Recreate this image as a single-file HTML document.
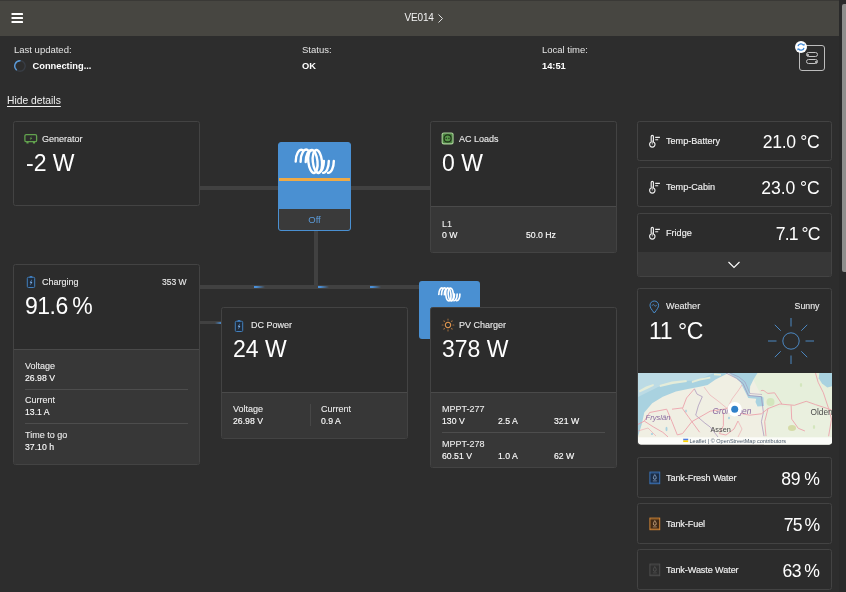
<!DOCTYPE html>
<html><head><meta charset="utf-8"><title>VE014</title>
<style>
*{box-sizing:border-box;margin:0;padding:0}
html,body{width:846px;height:592px;overflow:hidden;background:#2d2d2d;color:#f4f4f4;font-family:"Liberation Sans",Arial,sans-serif;font-size:9px}
body{position:relative;-webkit-font-smoothing:antialiased}
#root{position:absolute;left:0;top:0;width:846px;height:592px;will-change:transform}
.abs{position:absolute}
.hdr{position:absolute;left:0;top:0;width:839.500px;height:35.500px;background:#474641;border-top:1px solid #3a3936}
.sbtrack{position:absolute;left:839px;top:0;width:7px;height:592px;background:#2a2a2a}
.sbthumb{position:absolute;left:842px;top:3.500px;width:4px;height:268.500px;background:#8e8e8c;border-radius:2px 0 0 2px}
.t{position:absolute;white-space:nowrap;line-height:1}
.card{position:absolute;background:#2c2c2c;border:1px solid #434343;border-radius:2.500px;overflow:hidden}
.foot{position:absolute;left:0;right:0;bottom:0;background:#373737;border-top:1px solid #4a4a4a}
.line{position:absolute;background:#414141}
.big{font-size:23px;color:#fff;margin-top:-0.5px}
.lbl{font-size:9px;color:#ececec;margin-top:1px;-webkit-text-stroke:0.100px #ececec}
.val{font-size:8.7px;color:#fff;-webkit-text-stroke:0.12px #fff}
.fl{margin-top:0}
.rl{margin-top:-0.2px;font-size:9.1px}
.sep{position:absolute;height:1px;background:#4d4d4d}
</style></head><body>
<div id="root">

<div class="hdr"></div>
<div class="sbtrack"></div><div class="sbthumb"></div>

<!-- hamburger -->
<svg class="abs" style="left:11px;top:12px" width="13" height="12" viewBox="0 0 13 12"><g fill="#fff"><rect x="0.5" y="1" width="11.5" height="2" rx="0.6"/><rect x="0.5" y="5" width="11.5" height="2" rx="0.6"/><rect x="0.5" y="9" width="11.5" height="2" rx="0.6"/></g></svg>
<div class="t" style="left:404.500px;top:13px;font-size:10px;letter-spacing:-0.150px;color:#f2f2f2">VE014</div>
<svg class="abs" style="left:436px;top:13px" width="9" height="11" viewBox="0 0 9 11"><path d="M2.5 1.5 L6.5 5.5 L2.5 9.5" fill="none" stroke="#e0e0e0" stroke-width="1"/></svg>

<!-- info row -->
<div class="t" style="left:14px;top:45.300px;font-size:9.500px;color:#e4e4e4">Last updated:</div>
<svg class="abs" style="left:13px;top:59px" width="14" height="14" viewBox="0 0 14 14"><circle cx="7" cy="7" r="5.200" fill="none" stroke="#383d45" stroke-width="1.400"/><path d="M7 1.8 A5.2 5.2 0 0 0 3.3 10.7" fill="none" stroke="#5b9bd8" stroke-width="1.4" stroke-linecap="round"/></svg>
<div class="t" style="left:32.500px;top:61.700px;font-size:9.3px;font-weight:bold;color:#fff">Connecting...</div>
<div class="t" style="left:302px;top:45.300px;font-size:9.500px;color:#e4e4e4">Status:</div>
<div class="t" style="left:302px;top:61.5px;font-size:9.3px;font-weight:bold;color:#fff">OK</div>
<div class="t" style="left:542px;top:45.300px;font-size:9.500px;color:#e4e4e4">Local time:</div>
<div class="t" style="left:542px;top:61.5px;font-size:9.3px;font-weight:bold;color:#fff">14:51</div>

<!-- controls icon -->
<div class="abs" style="left:799px;top:45px;width:26px;height:26px;border:1.300px solid #bdbdbd;border-radius:3px"></div>
<div class="abs" style="left:806px;top:52.300px;width:12.300px;height:5.200px;border:1px solid #c4c4c4;border-radius:3px"></div><div class="abs" style="left:807.300px;top:53.900px;width:2.200px;height:2.200px;border-radius:2px;background:#d0d0d0"></div>
<div class="abs" style="left:806px;top:59px;width:12.300px;height:5.200px;border:1px solid #c4c4c4;border-radius:3px"></div><div class="abs" style="left:814.800px;top:60.600px;width:2.200px;height:2.200px;border-radius:2px;background:#d0d0d0"></div>
<div class="abs" style="left:794.600px;top:40.500px;width:12px;height:12px;border-radius:6px;background:#fff"></div>
<svg class="abs" style="left:794.600px;top:40.500px" width="12" height="12" viewBox="0 0 12 12"><path d="M3 5.2 A3.1 3.1 0 0 1 8.6 4.2 M9 6.8 A3.1 3.1 0 0 1 3.4 7.8" fill="none" stroke="#3b86d6" stroke-width="1.3"/><path d="M7.5 4.6 L9.6 4.6 L9.6 2.6 Z M4.5 7.4 L2.4 7.4 L2.4 9.4 Z" fill="#3b86d6"/></svg>

<div class="t" style="left:7px;top:95.500px;font-size:10.300px;color:#f0f0f0;text-decoration:underline;text-underline-offset:1.5px">Hide details</div>

<!-- connectors -->
<div class="line" style="left:199px;top:186px;width:80px;height:3.7px"></div>
<div class="line" style="left:350px;top:186px;width:80px;height:3.7px"></div>
<div class="line" style="left:314px;top:231px;width:3.6px;height:56px"></div>
<div class="line" style="left:199px;top:285px;width:221px;height:3.800px"></div>
<div class="line" style="left:199px;top:320.800px;width:22px;height:3.700px"></div><div class="abs" style="left:215px;top:321.700px;width:6px;height:2px;background:linear-gradient(90deg,rgba(74,144,217,0),#4a86c4)"></div>
<div class="abs" style="left:254.2px;top:285.900px;width:11px;height:2px;background:linear-gradient(90deg,#4a90d9 20%,rgba(74,144,217,0))"></div>
<div class="abs" style="left:318.2px;top:285.900px;width:11px;height:2px;background:linear-gradient(90deg,#4a90d9 20%,rgba(74,144,217,0))"></div>
<div class="abs" style="left:370.2px;top:285.900px;width:11px;height:2px;background:linear-gradient(90deg,#4a90d9 20%,rgba(74,144,217,0))"></div>

<!-- Generator -->
<div class="card" style="left:13px;top:121px;width:187px;height:85px"></div>
<svg class="abs" style="left:24px;top:133px" width="14" height="12" viewBox="0 0 14 12"><rect x="0.900" y="1.700" width="11.700" height="7" rx="1.300" fill="none" stroke="#62a24e" stroke-width="1.300"/><rect x="2.400" y="8.800" width="2.200" height="1.700" rx="0.500" fill="#62a24e"/><rect x="8.900" y="8.800" width="2.200" height="1.700" rx="0.500" fill="#62a24e"/><path d="M7.800 3.200L5.600 5.600H6.800L6 7.400L8.300 4.900H7.100Z" fill="#62a24e"/></svg>
<div class="t lbl" style="left:42px;top:134px">Generator</div>
<div class="t big" style="left:26px;top:152px">-2 W</div>

<!-- Charging -->
<div class="card" style="left:13px;top:264px;width:187px;height:201px"><div class="foot" style="height:115px"></div></div>
<svg class="abs" style="left:26px;top:275px" width="10" height="14" viewBox="0 0 10 14"><rect x="1.300" y="2.300" width="7.400" height="10.200" rx="1.100" fill="#1f2b3a" stroke="#4380bd" stroke-width="1"/><rect x="3.600" y="0.900" width="2.800" height="1.500" rx="0.400" fill="#3f7dc0"/><path d="M5.900 4.200L3.700 7.700H4.900L4.200 10.600L6.400 7H5.200Z" fill="#7db2ea"/></svg>
<div class="t lbl" style="left:42px;top:277px">Charging</div>
<div class="t lbl" style="left:162px;top:277px;font-size:8.5px">353 W</div>
<div class="t big" style="left:25px;top:295px;letter-spacing:-0.5px;word-spacing:-1.5px">91.6 %</div>
<div class="t lbl fl" style="left:25px;top:362px">Voltage</div>
<div class="t val" style="left:25px;top:374px">26.98 V</div>
<div class="sep" style="left:25px;top:389px;width:163px"></div>
<div class="t lbl fl" style="left:25px;top:396px">Current</div>
<div class="t val" style="left:25px;top:408px">13.1 A</div>
<div class="sep" style="left:25px;top:423px;width:163px"></div>
<div class="t lbl fl" style="left:25px;top:431px">Time to go</div>
<div class="t val" style="left:25px;top:443px">37.10 h</div>

<!-- Inverter -->
<div class="abs" style="left:278px;top:142px;width:73px;height:89px;background:#4a90d2;border-radius:3px;overflow:hidden;border:1px solid #4a90d2">
  <div class="abs" style="left:0;right:0;top:35px;height:3px;background:#efaa46"></div>
  <div class="abs" style="left:0;right:0;bottom:0;height:21.5px;background:#3a3a3a"></div>
  <div class="t" style="left:0;right:0;top:72px;text-align:center;font-size:9.5px;color:#5b9ad8">Off</div>
</div>
<svg class="abs" style="left:293px;top:148px" width="44" height="28" viewBox="0 0 44 28"><g fill="none" stroke="#fff" stroke-width="2.4" stroke-linecap="round"><path d="M2.7 13.6 A5.6 12 0 0 1 9.6 2.1"/><path d="M7.6 13.8 A5.6 12 0 0 1 14.7 2.1"/><path d="M12.7 14 A5.6 12 0 0 1 18.6 2.2"/><ellipse cx="19.9" cy="13.5" rx="4.6" ry="11.5" transform="rotate(-6 19.9 13.5)"/><ellipse cx="24.4" cy="13.500" rx="4.600" ry="11.500" transform="rotate(-6 24.4 13.5)"/><path d="M40.800 12.900 A5.600 12 0 0 1 35 24.900"/><path d="M35.800 12.900 A5.600 12 0 0 1 30.100 24.900"/><path d="M30.900 12.900 A5.600 12 0 0 1 26.500 24"/></g></svg>

<!-- AC Loads -->
<div class="card" style="left:430px;top:121px;width:187px;height:132px"><div class="foot" style="height:46px"></div></div>
<svg class="abs" style="left:441px;top:132px" width="13" height="13" viewBox="0 0 13 13"><rect x="0.600" y="0.400" width="12" height="12" rx="2.200" fill="#a9cf98"/><rect x="1.700" y="1.500" width="9.800" height="9.800" rx="1.300" fill="#4a8440"/><circle cx="6.600" cy="6.400" r="3.500" fill="#5a9a4c" stroke="#1f3319" stroke-width="1.200"/><circle cx="5.300" cy="6.400" r="0.800" fill="#2a4222"/><circle cx="7.900" cy="6.400" r="0.800" fill="#2a4222"/></svg>
<div class="t lbl" style="left:459px;top:134px">AC Loads</div>
<div class="t big" style="left:442px;top:152px">0 W</div>
<div class="t lbl" style="left:442px;top:218.500px">L1</div>
<div class="t val" style="left:442px;top:231px">0 W</div>
<div class="t val" style="left:526px;top:231px">50.0 Hz</div>

<!-- DC Power -->
<div class="card" style="left:221px;top:307px;width:187px;height:132px"><div class="foot" style="height:46px"></div></div>
<svg class="abs" style="left:234px;top:318.5px" width="10" height="14" viewBox="0 0 10 14"><rect x="1.300" y="2.300" width="7.400" height="10.200" rx="1.100" fill="#1f2b3a" stroke="#4380bd" stroke-width="1"/><rect x="3.600" y="0.900" width="2.800" height="1.500" rx="0.400" fill="#3f7dc0"/><path d="M5.900 4.200L3.700 7.700H4.900L4.200 10.600L6.400 7H5.200Z" fill="#7db2ea"/></svg>
<div class="t lbl" style="left:251px;top:320px">DC Power</div>
<div class="t big" style="left:233px;top:338px">24 W</div>
<div class="t lbl fl" style="left:233px;top:405px">Voltage</div>
<div class="t val" style="left:233px;top:417px">26.98 V</div>
<div class="abs" style="left:310px;top:404px;width:1px;height:22px;background:#474747"></div>
<div class="t lbl fl" style="left:321px;top:405px">Current</div>
<div class="t val" style="left:321px;top:417px">0.9 A</div>

<!-- MPPT blue box -->
<div class="abs" style="left:419px;top:281px;width:61px;height:57.500px;background:#4a90d2;border-radius:3px"></div>
<svg class="abs" style="left:437px;top:287px" width="25" height="15.500" viewBox="0 0 44 28"><g fill="none" stroke="#fff" stroke-width="3" stroke-linecap="round"><path d="M2.7 13.6 A5.6 12 0 0 1 9.6 2.1"/><path d="M7.6 13.8 A5.6 12 0 0 1 14.7 2.1"/><path d="M12.7 14 A5.6 12 0 0 1 18.6 2.2"/><ellipse cx="19.9" cy="13.5" rx="4.6" ry="11.5" transform="rotate(-6 19.9 13.5)"/><ellipse cx="24.4" cy="13.500" rx="4.600" ry="11.500" transform="rotate(-6 24.4 13.5)"/><path d="M40.800 12.900 A5.600 12 0 0 1 35 24.900"/><path d="M35.800 12.900 A5.600 12 0 0 1 30.100 24.900"/><path d="M30.900 12.900 A5.600 12 0 0 1 26.500 24"/></g></svg>

<!-- PV Charger -->
<div class="card" style="left:430px;top:307px;width:187px;height:160.500px"><div class="foot" style="height:75px"></div></div>
<svg class="abs" style="left:440.800px;top:317.800px" width="14" height="14" viewBox="-7 -7 14 14"><circle r="2.700" fill="none" stroke="#e89c52" stroke-width="1.050"/><g stroke="#e0924a" stroke-width="1.100" stroke-linecap="round" opacity="0.600"><path d="M0 -4.900V-5.900M0 4.900V5.900M-4.900 0H-5.900M4.900 0H5.900M-3.500 -3.500L-4.200 -4.200M3.500 3.500L4.200 4.200M-3.500 3.500L-4.200 4.200M3.500 -3.500L4.200 -4.200"/></g></svg>
<div class="t lbl" style="left:459px;top:320px">PV Charger</div>
<div class="t big" style="left:442px;top:338px">378 W</div>
<div class="t lbl fl" style="left:442px;top:405px">MPPT-277</div>
<div class="t val" style="left:442px;top:417px">130 V</div>
<div class="t val" style="left:498px;top:417px">2.5 A</div>
<div class="t val" style="left:554px;top:417px">321 W</div>
<div class="sep" style="left:442px;top:432px;width:163px"></div>
<div class="t lbl fl" style="left:442px;top:440px">MPPT-278</div>
<div class="t val" style="left:442px;top:452px">60.51 V</div>
<div class="t val" style="left:498px;top:452px">1.0 A</div>
<div class="t val" style="left:554px;top:452px">62 W</div>

<!-- Right column -->
<div class="card" style="left:637px;top:121px;width:195px;height:40px"></div>
<svg class="abs" style="left:648px;top:134px" width="13" height="14" viewBox="0 0 13 14"><path d="M3.2 7.9 V2.4 A1.1 1.1 0 0 1 5.4 2.4 V7.9 A2.7 2.7 0 1 1 3.2 7.9 Z M7.2 3.3 H11.9 M7.2 5.7 H10.2" fill="none" stroke="#f0f0f0" stroke-width="1.150"/><path d="M4.300 6.500 V10.500" stroke="#ececec" stroke-width="0.7"/></svg>
<div class="t lbl rl" style="left:666px;top:137px;-webkit-text-stroke:0.150px #eee;color:#f2f2f2">Temp-Battery</div>
<div class="t" style="right:26.500px;top:134.2px;font-size:17.600px;color:#fff;letter-spacing:-0.300px">21.0 °C</div>

<div class="card" style="left:637px;top:167px;width:195px;height:40px"></div>
<svg class="abs" style="left:648px;top:180px" width="13" height="14" viewBox="0 0 13 14"><path d="M3.2 7.9 V2.4 A1.1 1.1 0 0 1 5.4 2.4 V7.9 A2.7 2.7 0 1 1 3.2 7.9 Z M7.2 3.3 H11.9 M7.2 5.7 H10.2" fill="none" stroke="#f0f0f0" stroke-width="1.150"/><path d="M4.300 6.500 V10.500" stroke="#ececec" stroke-width="0.7"/></svg>
<div class="t lbl rl" style="left:666px;top:183px;-webkit-text-stroke:0.150px #eee;color:#f2f2f2">Temp-Cabin</div>
<div class="t" style="right:26.500px;top:180.2px;font-size:17.600px;color:#fff;letter-spacing:-0.100px">23.0 °C</div>

<div class="card" style="left:637px;top:213px;width:195px;height:64px"><div class="foot" style="height:24px;border-top:none"></div></div>
<svg class="abs" style="left:648px;top:226px" width="13" height="14" viewBox="0 0 13 14"><path d="M3.2 7.9 V2.4 A1.1 1.1 0 0 1 5.4 2.4 V7.9 A2.7 2.7 0 1 1 3.2 7.9 Z M7.2 3.3 H11.9 M7.2 5.7 H10.2" fill="none" stroke="#f0f0f0" stroke-width="1.150"/><path d="M4.300 6.500 V10.500" stroke="#ececec" stroke-width="0.7"/></svg>
<div class="t lbl rl" style="left:666px;top:229px;-webkit-text-stroke:0.150px #eee;color:#f2f2f2">Fridge</div>
<div class="t" style="right:26.500px;top:226.2px;font-size:17.600px;color:#fff;letter-spacing:-0.900px">7.1 °C</div>
<svg class="abs" style="left:727px;top:260px" width="14" height="9" viewBox="0 0 14 9"><path d="M1.500 2 L7 7.500 L12.500 2" fill="none" stroke="#fff" stroke-width="1.100"/></svg>

<!-- Weather -->
<div class="card" style="left:637px;top:288px;width:195px;height:157px"></div>
<div class="t lbl rl" style="left:666px;top:302px">Weather</div>
<div class="t lbl rl" style="right:26.500px;top:302px;font-size:8.800px">Sunny</div>
<div class="t big" style="left:649px;top:320px;letter-spacing:-0.400px">11 °C</div>

<svg class="abs" style="left:765.700px;top:316px" width="50" height="50" viewBox="-25 -25 50 50"><g fill="none" stroke="#4f92d2" stroke-width="0.900"><circle r="8.200"/><path d="M0 -14.500V-23M0 14.500V23M-14.500 0H-23M14.500 0H23M-10.300 -10.300L-16.200 -16.200M10.300 10.300L16.200 16.200M-10.300 10.300L-16.200 16.200M10.300 -10.300L16.200 -16.200"/></g></svg>
<svg class="abs" style="left:649px;top:299.500px" width="11" height="14" viewBox="0 0 11 14"><path d="M5.300 13 C2.500 9.500 1 7.500 1 5.300 A4.300 4.300 0 0 1 9.600 5.300 C9.600 7.500 8 9.500 5.300 13Z" fill="none" stroke="#4a8fd0" stroke-width="1"/><path d="M3 5.800 C3.800 4 4.800 4.200 5.300 5.300 S6.900 6.600 7.700 4.900" fill="none" stroke="#4a8fd0" stroke-width="0.800"/></svg>
<!-- map -->
<svg class="abs" style="left:637.500px;top:373.200px;border-radius:0 0 3px 3px" width="194" height="71.500" viewBox="0 0 194 71.500">
<defs><clipPath id="mc"><path d="M0 0H194V68.500a3 3 0 0 1-3 3H3a3 3 0 0 1-3-3Z"/></clipPath></defs>
<g clip-path="url(#mc)">
<rect width="194" height="72" fill="#f0efe3"/>
<rect x="126" width="68" height="72" fill="#eaf0df"/>
<path d="M112 0H194V40L170 30 150 34 130 36 124 24Z" fill="#e6efdb"/>
<path d="M0 0H90.600L88 1.300 77.500 6.600 69.600 11.900 61.700 13.800 51.100 15.800 37.900 18.400 24.800 23.700 14.200 30.300 6.300 39.500 3.700 51.400 0 63.200Z" fill="#a9d2e0"/>
<path d="M0 0H76L60 7 40 9 20 14 8 20 0 24Z" fill="#bcdbe5"/>
<g fill="#e4ecd9"><path d="M1 17.500 L8 13.500 15.500 11 15.800 12.800 8 16.500 1.500 19.500Z"/><path d="M21.500 12 L34 8.500 48.500 7 48.800 9 35 11 22 14Z"/><path d="M53.800 8 L62 5.500 72.200 3.800 72.400 5.600 62 7.500 54 10Z"/><path d="M76 0.500 L83 1 83 2.800 76 2.200Z"/></g>
<path d="M98.400 0H119.500L115.500 6.600 112.200 13.200 111.600 22.400 123.400 23 125.400 24.400 126 32.900 119.500 33.600 117.500 29 118.200 25.700 110.300 25 106.300 17.100 102.400 9.200 98.400 5.300 90 0Z" fill="#a9d2e0"/>
<path d="M181.400 0H194V13.200L189.300 14.500 184 10.500 180.700 5.300Z" fill="#a9d2e0"/>
<g fill="#d3e6bd"><ellipse cx="132.500" cy="29" rx="4" ry="4"/><ellipse cx="154" cy="55" rx="4" ry="3" fill="#d5dba8"/><ellipse cx="163" cy="12" rx="1.200" ry="2"/><ellipse cx="176" cy="54" rx="1.200" ry="2"/></g>
<g fill="#a9d2e0"><ellipse cx="28.500" cy="56" rx="1" ry="2.200"/><ellipse cx="48" cy="38" rx="0.800" ry="1.500"/><ellipse cx="91" cy="45" rx="1" ry="1.200"/><ellipse cx="14" cy="61" rx="1.200" ry="1"/></g>
<g fill="none" stroke="#9d86b5" stroke-width="0.800" opacity="0.800"><path d="M56.400 15.800 L59 21.100 64.300 23.700 60.300 32.900 57.700 42.200 66.900 50.100 72.200 54 80 64"/><path d="M88 0 L98.400 5.300 105 10.500 110.300 22.400 123.400 23.700 125.400 39.500 123.400 48.700 126 63.200"/><path d="M92 0 L101 4 107 9 112 20.500 124 21.500" stroke-width="0.600"/></g>
<g fill="none" stroke="#ec9aa6" stroke-width="0.900" stroke-linejoin="round" opacity="0.900">
<path d="M0 51.400 L6.300 48.100 15.500 54 24.800 59.300 30 63.900"/>
<path d="M6.300 48.100 L11.600 39.500 28.700 36.200 34 48.700 39.300 61.900 44.500 60.600 53.800 48.700 72.200 38.200 89.300 35.600 98.400 39.500 111.600 42.200 123.400 40.800 130 35.600 141.900 31 156.400 32.300 168.200 28.300 177.500 31.600 193.500 36.900"/>
<path d="M56.400 15.800 L48.500 25 44.500 35.600 51.100 44.800 61.700 59.300"/>
<path d="M34 36.200 L44.500 34.900"/>
<path d="M85.400 39.500 L85.400 52.700 81.400 60.600 88 62 96 56 100 48"/>
<path d="M122.800 17.800 C126 16 128 20 130 20.400 L136.600 19.800 143.900 31"/>
<path d="M130 35.600 L126.700 48.700 128 63.200"/>
<path d="M177.500 0 L180.100 9.200 185.400 19.800 190.600 35.600 193.500 46.100 190.600 63.200"/>
<path d="M153.100 32.300 L153.700 46.100 160.300 55.300 166.900 58"/>
<path d="M89.300 35.600 L94 26 100 18 104 12" stroke-width="0.600"/>
<path d="M89.300 35.600 L80 28 72 22 66 14" stroke-width="0.600"/>
<path d="M0 58 L10 55 18 63" stroke-width="0.600"/>
<path d="M100 48 L104 56 100 64" stroke-width="0.600"/>
</g>
<g font-family="'Liberation Sans',sans-serif">
<text x="7.500" y="47" font-size="7.600" font-style="italic" fill="#8a6aa0">Fryslân</text>
<text x="74.500" y="41.300" font-size="8.300" font-style="italic" fill="#8a6aa0">Groningen</text>
<text x="72.500" y="58.800" font-size="7.300" fill="#4a4a4a">Assen</text>
<text x="172.500" y="41.500" font-size="8.300" fill="#4a4a4a">Oldenburg</text>
</g>
<circle cx="96.700" cy="36.200" r="7.200" fill="#fff"/>
<circle cx="96.700" cy="36.200" r="3.500" fill="#2f80c9"/>
<rect x="0" y="64.300" width="194" height="8" fill="#fff" opacity="0.780"/>
<rect x="45.200" y="65.700" width="5" height="1.700" fill="#4c7be1"/><rect x="45.200" y="67.400" width="5" height="1.700" fill="#ffd500"/>
<text x="51.500" y="69.600" font-family="'Liberation Sans',sans-serif" font-size="5.500" fill="#4a5a6a" textLength="96.500" lengthAdjust="spacingAndGlyphs">Leaflet | © OpenStreetMap contributors</text>
</g>
</svg>

<!-- Tanks -->
<div class="card" style="left:637px;top:457px;width:195px;height:41px"></div>
<svg class="abs" style="left:649px;top:471px" width="12" height="14" viewBox="0 0 12 14"><rect x="0.900" y="1.100" width="9.800" height="11.600" fill="#1b2c44" stroke="#3b72b6" stroke-width="1"/><path d="M0.900 2.300H10.700M0.900 11.500H10.700" stroke="#3f78be" stroke-width="0.500" opacity="0.700"/><path d="M5.800 3.600C4.800 5.200 4.400 6 4.400 6.900A1.400 1.400 0 0 0 7.200 6.900C7.200 6 6.800 5.200 5.800 3.600Z" fill="none" stroke="#9dbbe0" stroke-width="0.750"/><path d="M3.800 9.900H7.800" stroke="#9dbbe0" stroke-width="0.600"/></svg>
<div class="t lbl rl" style="left:666px;top:474.1px;letter-spacing:-0.100px;-webkit-text-stroke:0.150px #eee;color:#f2f2f2">Tank-Fresh Water</div>
<div class="t" style="right:26.500px;top:471px;font-size:17.600px;color:#fff;letter-spacing:-0.300px;word-spacing:-0.700px">89 %</div>
<div class="card" style="left:637px;top:503px;width:195px;height:41px"></div>
<svg class="abs" style="left:649px;top:517px" width="12" height="14" viewBox="0 0 12 14"><rect x="0.900" y="1.100" width="9.800" height="11.600" fill="#402a16" stroke="#cf8436" stroke-width="1"/><path d="M0.900 2.300H10.700M0.900 11.500H10.700" stroke="#d88a38" stroke-width="0.500" opacity="0.700"/><path d="M5.800 3.600C4.800 5.200 4.400 6 4.400 6.900A1.400 1.400 0 0 0 7.200 6.900C7.200 6 6.800 5.200 5.800 3.600Z" fill="none" stroke="#e6c09a" stroke-width="0.750"/><path d="M3.800 9.900H7.800" stroke="#e6c09a" stroke-width="0.600"/></svg>
<div class="t lbl rl" style="left:666px;top:520.1px;letter-spacing:-0.100px;-webkit-text-stroke:0.150px #eee;color:#f2f2f2">Tank-Fuel</div>
<div class="t" style="right:26.500px;top:517px;font-size:17.600px;color:#fff;letter-spacing:-0.700px;word-spacing:-1.500px">75 %</div>
<div class="card" style="left:637px;top:549px;width:195px;height:41px"></div>
<svg class="abs" style="left:649px;top:563px" width="12" height="14" viewBox="0 0 12 14"><rect x="0.900" y="1.100" width="9.800" height="11.600" fill="#2f2f2f" stroke="#4e4e4e" stroke-width="1"/><path d="M0.900 2.300H10.700M0.900 11.500H10.700" stroke="#4e4e4e" stroke-width="0.500" opacity="0.700"/><path d="M5.800 3.600C4.800 5.200 4.400 6 4.400 6.900A1.400 1.400 0 0 0 7.200 6.900C7.200 6 6.800 5.200 5.800 3.600Z" fill="none" stroke="#5a5a5a" stroke-width="0.750"/><path d="M3.800 9.900H7.800" stroke="#5a5a5a" stroke-width="0.600"/></svg>
<div class="t lbl rl" style="left:666px;top:566.1px;letter-spacing:-0.100px;-webkit-text-stroke:0.150px #eee;color:#f2f2f2">Tank-Waste Water</div>
<div class="t" style="right:26.500px;top:563px;font-size:17.600px;color:#fff;letter-spacing:-0.500px;word-spacing:-1px">63 %</div>

</div>
</body></html>
